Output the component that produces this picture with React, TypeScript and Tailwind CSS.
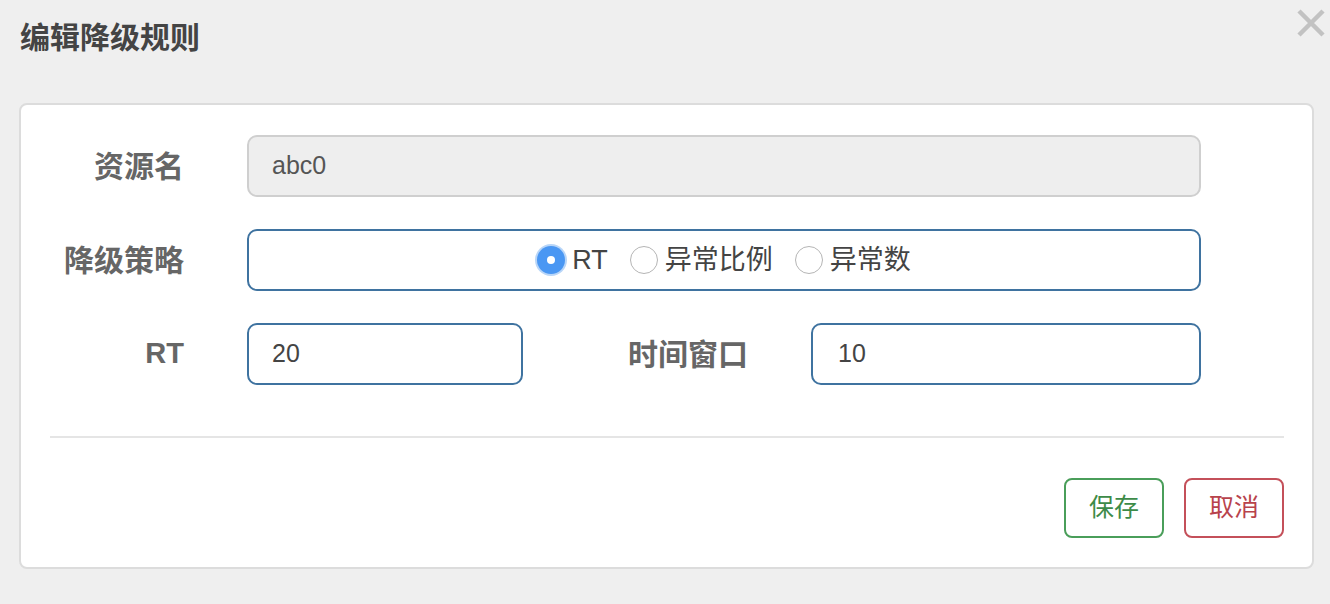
import React from 'react';

const cjk = "font-['Liberation_Sans','Noto_Sans_CJK_SC',sans-serif]";

function Radio({ checked, label }: { checked?: boolean; label: string }) {
  return (
    <label className="flex items-center">
      {checked ? (
        <span className="w-[28px] h-[28px] rounded-full bg-[#4a97f3] shadow-[0_0_0_2px_#b9d6f8] flex items-center justify-center">
          <span className="w-[8px] h-[8px] rounded-full bg-white" />
        </span>
      ) : (
        <span className="w-[28px] h-[28px] rounded-full bg-white border border-[#b5b5b5]" />
      )}
      <span className="ml-[7px] text-[27px] text-[#444]">{label}</span>
    </label>
  );
}

export default function App() {
  return (
    <div className={`w-[1330px] h-[604px] bg-[#efefef] ${cjk} flex flex-col`}>
      <div className="flex items-start justify-between pl-[20px] pr-[5px]">
        <h1 className="mt-[18px] text-[30px] leading-[40px] font-bold text-[#444]">编辑降级规则</h1>
        <svg width="28" height="28" viewBox="0 0 28 28" className="mt-[9px]">
          <path d="M2 2 L26 26 M26 2 L2 26" stroke="#c2c2c2" strokeWidth="4.5" strokeLinecap="butt" />
        </svg>
      </div>

      <div className="mt-[45px] ml-[19px] w-[1295px] h-[466px] bg-white border-2 border-[#dcdcdc] rounded-[8px] flex flex-col pt-[30px]">
        <div className="flex items-center">
          <div className="w-[163px] text-right text-[30px] font-bold text-[#666]">资源名</div>
          <div className="ml-[63px] w-[954px] h-[62px] bg-[#eeeeee] border-2 border-[#cfcfcf] rounded-[10px] flex items-center pl-[23px] text-[25px] text-[#555]">
            abc0
          </div>
        </div>

        <div className="flex items-center mt-[32px]">
          <div className="w-[163px] text-right text-[30px] font-bold text-[#666]">降级策略</div>
          <div className="ml-[63px] w-[954px] h-[62px] border-2 border-[#3f73a0] rounded-[10px] flex items-center justify-center gap-[22px]">
            <Radio checked label="RT" />
            <Radio label="异常比例" />
            <Radio label="异常数" />
          </div>
        </div>

        <div className="flex items-center mt-[32px]">
          <div className="w-[163px] text-right text-[29px] font-bold text-[#666]">RT</div>
          <div className="ml-[63px] w-[276px] h-[62px] border-2 border-[#3f73a0] rounded-[10px] flex items-center pl-[23px] text-[25px] text-[#444]">
            20
          </div>
          <div className="w-[225px] text-right text-[30px] font-bold text-[#666]">时间窗口</div>
          <div className="ml-[63px] w-[390px] h-[62px] border-2 border-[#3f73a0] rounded-[10px] flex items-center pl-[25px] text-[25px] text-[#444]">
            10
          </div>
        </div>

        <div className="mt-[51px] ml-[29px] w-[1234px] h-[2px] bg-[#e5e5e5]" />

        <div className="flex justify-end gap-[20px] mt-[40px] mr-[28px]">
          <button className="w-[100px] h-[60px] border-2 border-[#4a9e5a] rounded-[8px] bg-white text-[25px] text-[#3d8b48]">保存</button>
          <button className="w-[100px] h-[60px] border-2 border-[#c4505a] rounded-[8px] bg-white text-[25px] text-[#b8434c]">取消</button>
        </div>
      </div>
    </div>
  );
}
